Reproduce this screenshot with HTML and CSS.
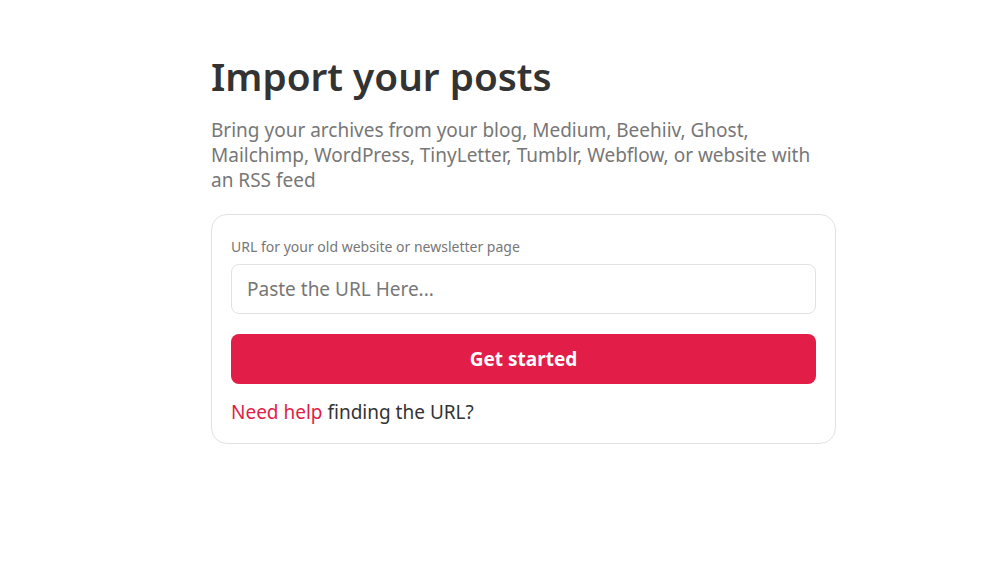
FILE: index.html
```html
<!DOCTYPE html>
<html lang="en">
<head>
<meta charset="utf-8">
<link rel="stylesheet" href="styles.css">
</head>
<body>
<main class="page">
  <h1 class="title">Import your posts</h1>
  <p class="subtitle">Bring your archives from your blog, Medium, Beehiiv, Ghost, Mailchimp, WordPress, TinyLetter, Tumblr, Webflow, or website with an RSS feed</p>
  <div class="card">
    <label class="label" for="url">URL for your old website or newsletter page</label>
    <input class="input" id="url" type="text" placeholder="Paste the URL Here...">
    <button class="button" type="button">Get started</button>
    <p class="help"><a class="help-link" href="#">Need help</a> finding the URL?</p>
  </div>
</main>
</body>
</html>
```

FILE: styles.css
```css
html, body {
  margin: 0;
  padding: 0;
  background: #fff;
}
body {
  font-family: "Noto Sans", "Open Sans", sans-serif;
  color: #333;
}
.page {
  width: 625px;
  margin: 0 auto;
  padding-top: 50px;
  box-sizing: border-box;
  position: relative;
  left: 21px;
}
.title {
  margin: 0;
  font-size: 38.7px;
  font-weight: 600;
  line-height: 52px;
  color: #333;
}
.subtitle {
  margin: 16px 0 0;
  font-size: 19px;
  line-height: 25px;
  color: #777;
}
.card {
  margin-top: 21px;
  border: 1px solid #e2e2e2;
  border-radius: 16px;
  padding: 22px 19px 19px;
  display: flex;
  flex-direction: column;
}
.label {
  font-size: 14px;
  line-height: 20px;
  color: #777;
}
.input {
  margin-top: 7px;
  height: 50px;
  box-sizing: border-box;
  border: 1px solid #e2e2e2;
  border-radius: 8px;
  padding: 0 15px;
  font-family: inherit;
  font-size: 19px;
  color: #333;
  outline: none;
}
.input::placeholder {
  color: #777;
}
.button {
  margin-top: 20px;
  height: 50px;
  border: none;
  border-radius: 8px;
  background: #e11d48;
  color: #fff;
  font-family: inherit;
  font-size: 19px;
  font-weight: 700;
  cursor: pointer;
}
.help {
  margin: 16px 0 0;
  font-size: 19px;
  line-height: 24px;
  color: #333;
}
.help-link {
  color: #e11d48;
  text-decoration: none;
}
```
